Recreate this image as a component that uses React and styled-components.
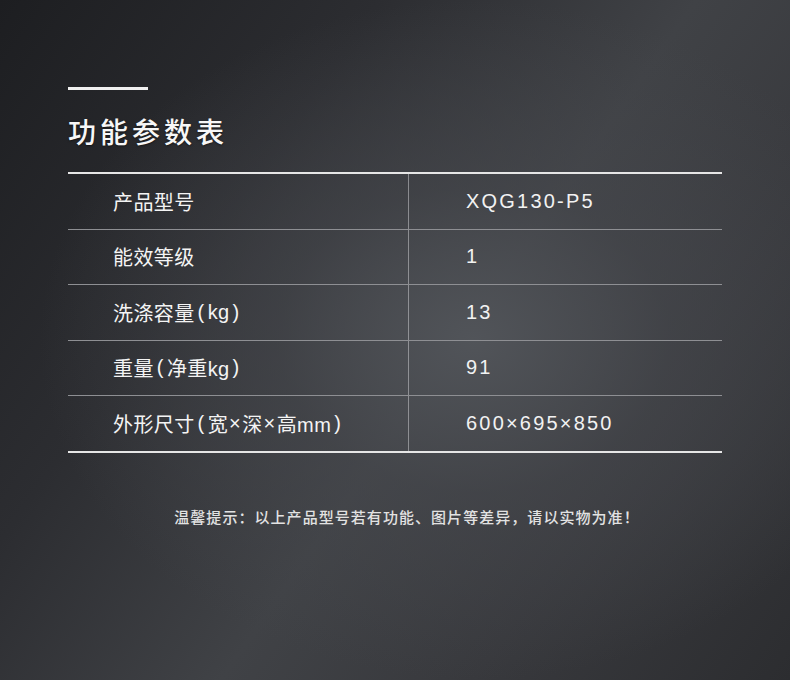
import React from "react";
import styled, { createGlobalStyle } from "styled-components";

const GlobalStyle = createGlobalStyle`
  html, body {
    margin: 0;
    padding: 0;
    background: #2a2b2e;
  }
  * {
    box-sizing: border-box;
  }
`;

const specs = [
  { label: "产品型号", value: "XQG130-P5" },
  { label: "能效等级", value: "1" },
  { label: "洗涤容量(kg)", value: "13" },
  { label: "重量(净重kg)", value: "91" },
  { label: "外形尺寸(宽×深×高mm)", value: "600×695×850" },
];

// parens and × get a little air around them, like the original artwork
const renderLabel = (text) =>
  text.split(/([()×])/).map((part, i) => {
    if (part === "(" || part === ")") return <Paren key={i}>{part}</Paren>;
    if (part === "×") return <Times key={i}>{part}</Times>;
    return part;
  });

const App = () => {
  return (
    <>
      <GlobalStyle />
      <Page>
        <Accent />
        <Title>功能参数表</Title>
        <SpecTable>
          {specs.map((row, i) => (
            <Row key={row.label} last={i === specs.length - 1}>
              <Label>{renderLabel(row.label)}</Label>
              <Value>{row.value}</Value>
            </Row>
          ))}
        </SpecTable>
        <Note>温馨提示：以上产品型号若有功能、图片等差异，请以实物为准！</Note>
      </Page>
    </>
  );
};

export default App;

const Page = styled.div`
  width: 790px;
  height: 680px;
  padding: 87px 68px 0;
  overflow: hidden;
  font-family: "Noto Sans CJK SC", "Noto Sans", sans-serif;
  color: #f2f2f2;
  background:
    radial-gradient(ellipse 55% 50% at 60% 50%, rgba(82, 85, 90, 0.95) 0%, rgba(70, 72, 77, 0.6) 45%, rgba(50, 51, 55, 0) 100%),
    linear-gradient(125deg, #1d1e21 0%, #2c2d31 30%, #404246 55%, #38393d 75%, #2c2d30 100%);
`;

const Accent = styled.div`
  width: 80px;
  height: 3px;
  background: #f0f0f0;
`;

const Title = styled.h1`
  margin: 22px 0 0;
  font-size: 28px;
  font-weight: 500;
  line-height: 39px;
  letter-spacing: 4px;
  color: #f7f7f7;
  text-shadow: 0 1px 2px rgba(0, 0, 0, 0.5);
`;

const SpecTable = styled.div`
  margin-top: 21px;
  width: 654px;
  border-top: 2px solid #e6e6e6;
  border-bottom: 2px solid #e6e6e6;
`;

const Row = styled.div`
  display: grid;
  grid-template-columns: 340px 1fr;
  height: ${(p) => (p.last ? "54.5px" : "55.5px")};
  border-bottom: ${(p) => (p.last ? "none" : "1.5px solid #8e8f93")};
`;

const Label = styled.div`
  display: flex;
  align-items: center;
  padding-left: 45px;
  font-family: "Liberation Sans", "Noto Sans CJK SC", sans-serif;
  font-size: 20px;
  letter-spacing: 0.4px;
  color: #f4f4f4;
  white-space: pre;
`;

const Paren = styled.span`
  margin: 0 3px;
`;

const Times = styled.span`
  margin: 0 1px;
`;

const Value = styled.div`
  display: flex;
  align-items: center;
  padding-left: 57px;
  border-left: 1.5px solid rgba(200, 200, 204, 0.55);
  font-family: "Liberation Sans", Arial, sans-serif;
  font-size: 20px;
  letter-spacing: 2.2px;
  color: #f2f2f2;
`;

const Note = styled.p`
  margin: 53px 0 0;
  padding-left: 24px;
  text-align: center;
  font-size: 15px;
  font-weight: 500;
  line-height: 22px;
  letter-spacing: 1.05px;
  color: #e2e2e2;
`;
